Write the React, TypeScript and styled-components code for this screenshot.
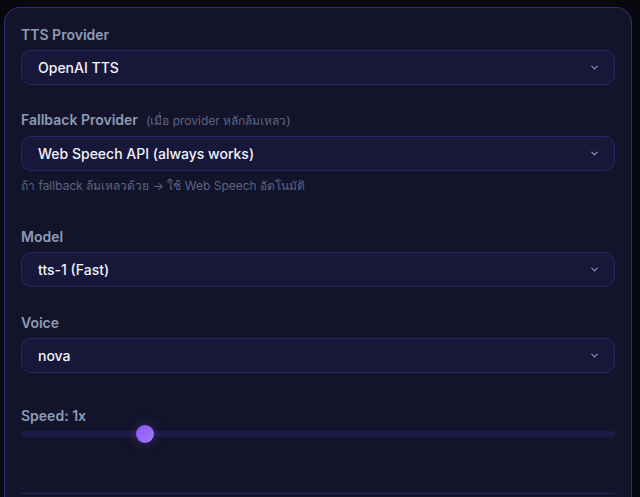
import React from 'react';
import styled, { createGlobalStyle } from 'styled-components';
import { ChevronDown } from 'lucide-react';

const GlobalStyle = createGlobalStyle`
  html, body {
    margin: 0;
    padding: 0;
    background: #08080f;
    font-family: Inter, "Noto Sans", "DejaVu Sans", sans-serif;
    overflow: hidden;
  }
`;

const Page = styled.div`
  padding: 7px 8px 0 4px;
  height: 497px;
  box-sizing: border-box;
`;

const Card = styled.section`
  background: #131329;
  border: 1px solid #3a2a7c;
  border-bottom: none;
  border-radius: 16px 16px 0 0;
  padding: 17px 16px 0 16px;
  height: 100%;
  box-sizing: border-box;
  display: flex;
  flex-direction: column;
`;

const Field = styled.div<{ $gap?: number }>`
  display: flex;
  flex-direction: column;
  margin-bottom: ${(p) => p.$gap ?? 25}px;
`;

const Label = styled.label`
  display: flex;
  align-items: baseline;
  font-size: 14px;
  line-height: 20px;
  font-weight: 600;
  color: #8d9bb6;
  margin-bottom: 5px;
`;

const LabelNote = styled.span`
  font-size: 12px;
  font-weight: 400;
  color: #5c6686;
  margin-left: 8px;
`;

const SelectBox = styled.div`
  height: 35px;
  box-sizing: border-box;
  display: flex;
  align-items: center;
  justify-content: space-between;
  padding: 0 14px 0 16px;
  background: #17173a;
  border: 1px solid #2e2468;
  border-radius: 10px;
  color: #f2f2f8;
  font-size: 14px;
  font-weight: 500;
  cursor: pointer;

  svg {
    color: #8a8fb4;
  }
`;

const Hint = styled.p`
  margin: 7px 0 0 0;
  font-size: 12px;
  line-height: 16px;
  color: #5a6484;
`;

const Range = styled.input`
  -webkit-appearance: none;
  appearance: none;
  display: block;
  width: 100%;
  height: 6px;
  margin: 0;
  background: #1e1a45;
  border-radius: 3px;
  outline: none;

  &::-webkit-slider-thumb {
    -webkit-appearance: none;
    appearance: none;
    width: 18px;
    height: 18px;
    border-radius: 50%;
    background: linear-gradient(135deg, #8b57f5, #a27af8);
    box-shadow: 0 0 12px rgba(139, 92, 246, 0.35);
    cursor: pointer;
  }

  &::-moz-range-thumb {
    width: 18px;
    height: 18px;
    border: none;
    border-radius: 50%;
    background: #8b5cf6;
  }
`;

const Divider = styled.div`
  margin-top: 56px;
  border-top: 1px solid #2a2060;
`;

const Select: React.FC<{ value: string }> = ({ value }) => (
  <SelectBox>
    <span>{value}</span>
    <ChevronDown size={11} strokeWidth={2.75} />
  </SelectBox>
);

const App: React.FC = () => {
  const [speed, setSpeed] = React.useState(1);

  return (
    <Page>
      <GlobalStyle />
      <Card>
        <Field>
          <Label>TTS Provider</Label>
          <Select value="OpenAI TTS" />
        </Field>

        <Field $gap={33}>
          <Label>
            Fallback Provider
            <LabelNote>(เมื่อ provider หลักล้มเหลว)</LabelNote>
          </Label>
          <Select value="Web Speech API (always works)" />
          <Hint>ถ้า fallback ล้มเหลวด้วย → ใช้ Web Speech อัตโนมัติ</Hint>
        </Field>

        <Field $gap={26}>
          <Label>Model</Label>
          <Select value="tts-1 (Fast)" />
        </Field>

        <Field $gap={33}>
          <Label>Voice</Label>
          <Select value="nova" />
        </Field>

        <Field $gap={0}>
          <Label>Speed: {speed}x</Label>
          <Range
            type="range"
            min={0.25}
            max={4}
            step={0.25}
            value={speed}
            onChange={(e) => setSpeed(Number(e.target.value))}
          />
        </Field>

        <Divider />
      </Card>
    </Page>
  );
};

export default App;
